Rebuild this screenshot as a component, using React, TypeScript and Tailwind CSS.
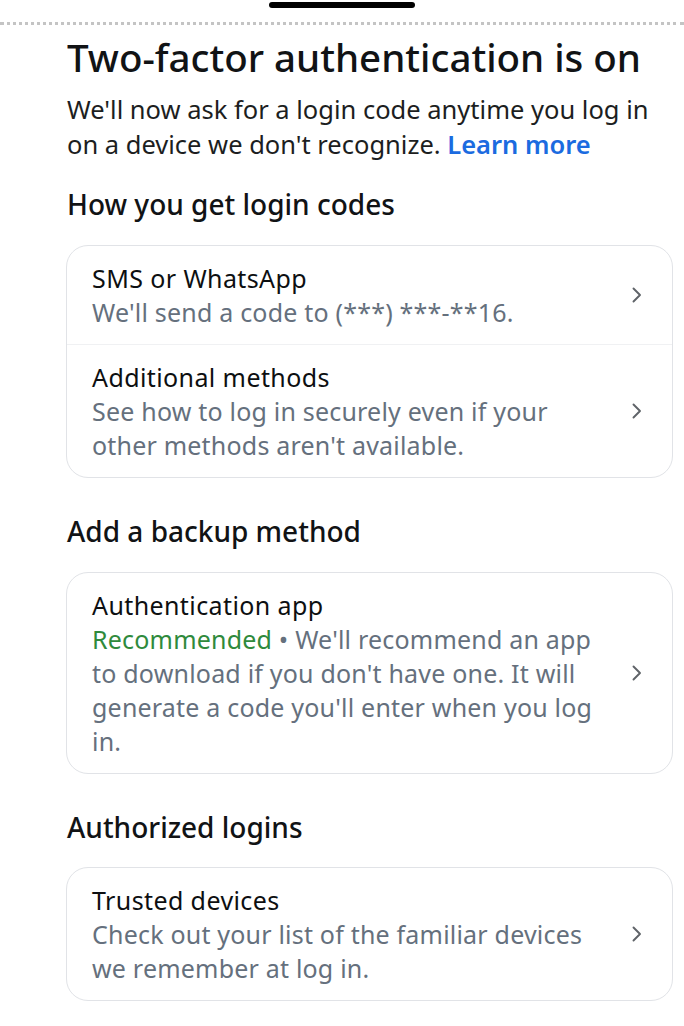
import React from "react";

const font = { fontFamily: "'Noto Sans', Roboto, sans-serif" };

function Chevron() {
  return (
    <svg width="12" height="18" viewBox="0 0 12 18" className="shrink-0">
      <path d="M2.5 2.5 L9 9 L2.5 15.5" fill="none" stroke="#5f6368" strokeWidth="1.9" strokeLinecap="round" strokeLinejoin="round" />
    </svg>
  );
}

function Row({ title, lines, last }: { title: string; lines: React.ReactNode[]; last?: boolean }) {
  return (
    <div className={`flex items-center pl-[25px] pr-[29px] ${last ? "" : "border-b border-[#f0f1f3]"}`}>
      <div className="flex-1 py-[15px]">
        <div className="text-[25px] leading-[34px] tracking-[0.4px] text-[#0d0f11] whitespace-nowrap">{title}</div>
        {lines.map((l, i) => (
          <div key={i} className="text-[25px] leading-[34px] tracking-[0.2px] text-[#65707d] whitespace-nowrap">
            {l}
          </div>
        ))}
      </div>
      <Chevron />
    </div>
  );
}

function Card({ children }: { children: React.ReactNode }) {
  return <div className="ml-[66px] mr-[11px] rounded-[22px] border border-[#e1e3e7] bg-white">{children}</div>;
}

function Section({ children }: { children: React.ReactNode }) {
  return (
    <div className="pl-[67px] text-[28px] leading-[34px] font-medium text-[#111315] whitespace-nowrap">{children}</div>
  );
}

export default function App() {
  return (
    <div className="w-[684px] h-[1026px] bg-white overflow-hidden" style={font}>
      <div className="flex justify-center pt-[2px]">
        <div className="w-[146px] h-[6px] rounded-full bg-black" />
      </div>
      <div className="mt-[14px] border-t-[3px] border-dotted border-[#c4c4c4]" />
      <div className="pl-[67px] mt-[10px]">
        <h1 className="text-[38.5px] leading-[44px] font-medium text-[#111315] whitespace-nowrap">
          Two-factor authentication is on
        </h1>
        <p className="mt-[13px] text-[25.5px] leading-[35px] text-[#1c1e21]">
          <span className="block whitespace-nowrap">We'll now ask for a login code anytime you log in</span>
          <span className="block whitespace-nowrap">
            on a device we don't recognize. <span className="text-[#1b6be0] font-semibold">Learn more</span>
          </span>
        </p>
      </div>
      <div className="mt-[25px]">
        <Section>How you get login codes</Section>
      </div>
      <div className="mt-[24px]">
        <Card>
          <Row title="SMS or WhatsApp" lines={["We'll send a code to (***) ***-**16."]} />
          <Row
            title="Additional methods"
            last
            lines={["See how to log in securely even if your", "other methods aren't available."]}
          />
        </Card>
      </div>
      <div className="mt-[36px]">
        <Section>Add a backup method</Section>
      </div>
      <div className="mt-[24px]">
        <Card>
          <Row
            title="Authentication app"
            last
            lines={[
              <>
                <span className="text-[#2f8a3c]">Recommended</span> • We'll recommend an app
              </>,
              "to download if you don't have one. It will",
              "generate a code you'll enter when you log",
              "in.",
            ]}
          />
        </Card>
      </div>
      <div className="mt-[36px]">
        <Section>Authorized logins</Section>
      </div>
      <div className="mt-[23px]">
        <Card>
          <Row
            title="Trusted devices"
            last
            lines={["Check out your list of the familiar devices", "we remember at log in."]}
          />
        </Card>
      </div>
    </div>
  );
}
